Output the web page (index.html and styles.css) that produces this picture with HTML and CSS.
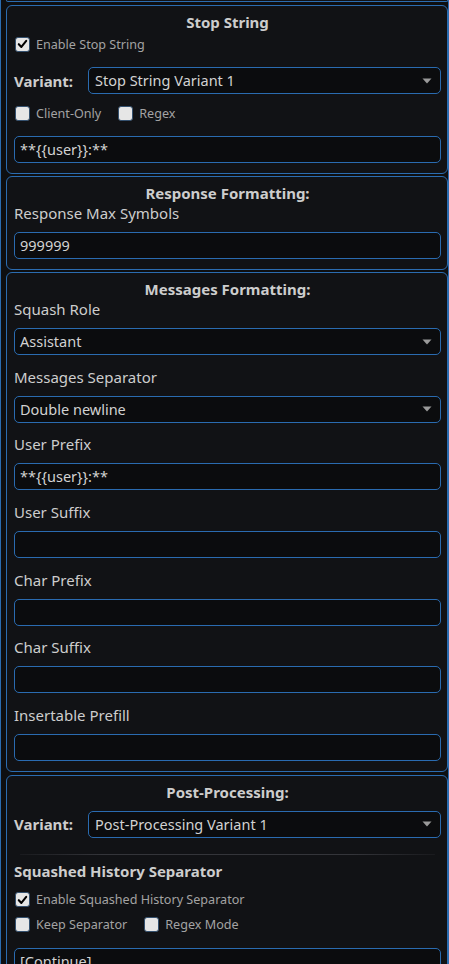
FILE: index.html
```html
<!DOCTYPE html>
<html lang="en">
<head>
<meta charset="utf-8">
<title>Formatting settings</title>
<link rel="stylesheet" href="styles.css">
</head>
<body>
<div class="drawer">
  <div class="panel panel-prev"></div>

  <section class="panel panel-stop">
    <h3 class="panel-title">Stop String</h3>
    <div class="check-line first">
      <span class="check"><span class="cb cb-on"><svg viewBox="0 0 14 14" width="14" height="14"><path d="M3 7.2 L5.8 10.2 L11 3.6" fill="none" stroke="#000" stroke-width="2.2" stroke-linecap="round" stroke-linejoin="round"/></svg></span>Enable Stop String</span>
    </div>
    <div class="variant-row">
      <span class="variant-label">Variant:</span>
      <div class="field select">Stop String Variant 1<svg class="arrow" viewBox="0 0 10 6" width="10" height="6"><path d="M0.5 0.5 H9.5 L5 5.5 Z" fill="#9a9a9a"/></svg></div>
    </div>
    <div class="check-line second">
      <span class="check"><span class="cb"></span>Client-Only</span>
      <span class="check"><span class="cb"></span>Regex</span>
    </div>
    <div class="field input stop-input">**{{user}}:**</div>
  </section>

  <section class="panel">
    <h3 class="panel-title">Response Formatting:</h3>
    <div class="label">Response Max Symbols</div>
    <div class="field input">999999</div>
  </section>

  <section class="panel">
    <h3 class="panel-title">Messages Formatting:</h3>
    <div class="label">Squash Role</div>
    <div class="field select">Assistant<svg class="arrow" viewBox="0 0 10 6" width="10" height="6"><path d="M0.5 0.5 H9.5 L5 5.5 Z" fill="#9a9a9a"/></svg></div>
    <div class="label">Messages Separator</div>
    <div class="field select">Double newline<svg class="arrow" viewBox="0 0 10 6" width="10" height="6"><path d="M0.5 0.5 H9.5 L5 5.5 Z" fill="#9a9a9a"/></svg></div>
    <div class="label">User Prefix</div>
    <div class="field input">**{{user}}:**</div>
    <div class="label">User Suffix</div>
    <div class="field input"></div>
    <div class="label">Char Prefix</div>
    <div class="field input"></div>
    <div class="label">Char Suffix</div>
    <div class="field input"></div>
    <div class="label">Insertable Prefill</div>
    <div class="field input"></div>
  </section>

  <section class="panel panel-post">
    <h3 class="panel-title">Post-Processing:</h3>
    <div class="variant-row post-variant">
      <span class="variant-label">Variant:</span>
      <div class="field select">Post-Processing Variant 1<svg class="arrow" viewBox="0 0 10 6" width="10" height="6"><path d="M0.5 0.5 H9.5 L5 5.5 Z" fill="#9a9a9a"/></svg></div>
    </div>
    <hr class="divider">
    <h4 class="sub-title">Squashed History Separator</h4>
    <div class="check-line post-first">
      <span class="check"><span class="cb cb-on"><svg viewBox="0 0 14 14" width="14" height="14"><path d="M3 7.2 L5.8 10.2 L11 3.6" fill="none" stroke="#000" stroke-width="2.2" stroke-linecap="round" stroke-linejoin="round"/></svg></span>Enable Squashed History Separator</span>
    </div>
    <div class="check-line post-second">
      <span class="check"><span class="cb"></span>Keep Separator</span>
      <span class="check"><span class="cb"></span>Regex Mode</span>
    </div>
    <div class="field input post-input">[Continue]</div>
  </section>
</div>
</body>
</html>
```
FILE: styles.css
```css
* { box-sizing: border-box; }

html, body {
  margin: 0;
  padding: 0;
  background: #0e0f11;
  height: 964px;
  overflow: hidden;
}

body {
  font-family: "Noto Sans", "Open Sans", sans-serif;
  color: #cfcfcf;
  font-size: 15px;
}

.drawer {
  width: 449px;
  min-height: 964px;
  border-left: 1px solid #2b6cb0;
  border-right: 1px solid #2b6cb0;
  padding: 0 0 0 5px;
  display: flex;
  flex-direction: column;
  gap: 2px;
}

.panel {
  border: 1px solid #2b6cb0;
  border-radius: 6px;
  background: #111215;
  padding: 6px 6px 10px 7px;
  display: flex;
  flex-direction: column;
}

.panel-prev {
  height: 2px;
  padding: 0;
  border-top: none;
  border-radius: 0 0 6px 6px;
  margin-bottom: 1px;
}

.panel-post { margin-top: 1px; }

.panel-title {
  margin: 0;
  font-size: 15px;
  font-weight: 700;
  line-height: 20px;
  text-align: center;
  color: #cdcdcd;
}

.label {
  font-size: 15px;
  line-height: 20px;
  color: #cdcdcd;
  margin-bottom: 9px;
}

.field {
  height: 27px;
  border: 1px solid #2a6bb0;
  border-radius: 5px;
  background: #0b0c0e;
  color: #d2d2d2;
  font-size: 14.5px;
  line-height: 25px;
  padding: 0 8px 0 5px;
  display: flex;
  align-items: center;
  justify-content: space-between;
  white-space: nowrap;
}

.field + .label { margin-top: 11.67px; }

.select .arrow { flex: 0 0 auto; }

.variant-row {
  display: flex;
  align-items: center;
}

.variant-label {
  flex: 0 0 74px;
  font-weight: 700;
  font-size: 15px;
  color: #cdcdcd;
}

.variant-row .field { flex: 1 1 auto; padding-left: 6px; }

.check-line {
  display: flex;
  align-items: center;
  gap: 16px;
  height: 20px;
}

.check {
  display: inline-flex;
  align-items: center;
  gap: 6px;
  font-size: 12.6px;
  color: #a3a3a3;
}

.cb {
  width: 15px;
  height: 15px;
  margin-left: 1px;
  border: 1px solid #34506e;
  border-radius: 3px;
  background: #e6e6e6;
  display: inline-flex;
  align-items: center;
  justify-content: center;
}

.cb svg { display: block; }

.panel-stop .check-line.first { margin-top: 2px; }
.panel-stop .variant-row { margin-top: 13px; }
.panel-stop .check-line.second { margin-top: 9px; }
.stop-input { margin-top: 13px; }

.post-variant { margin-top: 9px; }

.divider {
  border: none;
  height: 1px;
  margin: 16px 6px 0;
  background: linear-gradient(90deg, rgba(60,60,66,0.2), #34353a 20%, #34353a 80%, rgba(60,60,66,0.2));
}

.sub-title {
  margin: 6px 0 0;
  font-size: 15px;
  font-weight: 700;
  line-height: 20px;
  color: #cdcdcd;
}

.post-first { margin-top: 9px; }
.post-second { margin-top: 5px; }
.post-input { margin-top: 13px; }
```
